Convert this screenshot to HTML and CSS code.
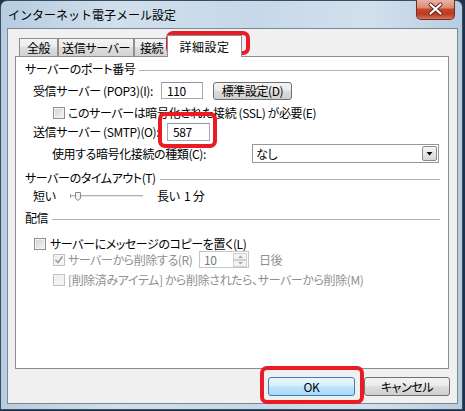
FILE: index.html
```html
<!DOCTYPE html>
<html lang="ja">
<head>
<meta charset="utf-8">
<title>インターネット電子メール設定</title>
<link rel="stylesheet" href="styles.css">
</head>
<body>
<div class="window">
  <div class="titlebar">
    <span class="title">インターネット電子メール設定</span>
    <div class="close">
      <svg width="39" height="20" viewBox="0 0 39 20">
        <path d="M14.5 4.5 L24.5 13.5 M24.5 4.5 L14.5 13.5" stroke="#5a2119" stroke-width="4" stroke-linecap="round"/>
        <path d="M14.5 4.5 L24.5 13.5 M24.5 4.5 L14.5 13.5" stroke="#ffffff" stroke-width="2.2" stroke-linecap="round"/>
      </svg>
    </div>
  </div>
  <div class="client">
    <div class="tabs">
      <div class="tab t1">全般</div>
      <div class="tab t2">送信サーバー</div>
      <div class="tab t3">接続</div>
      <div class="tab sel">詳細設定</div>
    </div>
    <div class="panel">
      <div class="group"><span>サーバーのポート番号</span><i class="rule"></i></div>
      <div class="row r-pop">
        <span class="lbl w-pop">受信サーバー (POP3)(I):</span>
        <span class="field f-pop">110</span>
        <span class="btn std">標準設定(D)</span>
      </div>
      <div class="row r-ssl">
        <span class="cb"></span>
        <span>このサーバーは暗号化された接続 (SSL) が必要(E)</span>
      </div>
      <div class="row r-smtp">
        <span class="lbl w-smtp">送信サーバー (SMTP)(O):</span>
        <span class="field f-smtp">587</span>
      </div>
      <div class="row r-enc">
        <span class="lbl w-enc">使用する暗号化接続の種類(C):</span>
        <span class="select">
          <span>なし</span>
          <span class="drop">
            <svg width="13" height="13" viewBox="0 0 13 13"><path d="M3.5 5 L9.5 5 L6.5 8.5 Z" fill="#000"/></svg>
          </span>
        </span>
      </div>
      <div class="group g2"><span>サーバーのタイムアウト(T)</span><i class="rule"></i></div>
      <div class="row r-slider">
        <span class="lbl w-short">短い</span>
        <svg class="slider" width="75" height="16" viewBox="0 0 75 16">
          <line x1="0" y1="7.5" x2="73" y2="7.5" stroke="#b0b0b0" stroke-width="1"/>
          <line x1="0" y1="8.5" x2="73" y2="8.5" stroke="#e6e6e6" stroke-width="1"/>
          <line x1="0.5" y1="6" x2="0.5" y2="10" stroke="#9a9a9a" stroke-width="1"/>
          <path d="M5.5 4.5 L10.5 4.5 L10.5 10.5 L8 12.5 L5.5 10.5 Z" fill="#f4f4f4" stroke="#8a8a8a" stroke-width="1"/>
        </svg>
        <span class="long">長い&nbsp;&nbsp;1 分</span>
      </div>
      <div class="group g3"><span>配信</span><i class="rule"></i></div>
      <div class="row r-copy">
        <span class="cb"></span>
        <span>サーバーにメッセージのコピーを置く(L)</span>
      </div>
      <div class="row r-del">
        <span class="cb dis">
          <svg width="10" height="10" viewBox="0 0 10 10"><path d="M1.5 5 L4 7.5 L8.5 1.5" fill="none" stroke="#9c9c9c" stroke-width="1.6"/></svg>
        </span>
        <span class="gray w-del">サーバーから削除する(R)</span>
        <span class="spin">
          <span class="spin-val">10</span>
          <span class="spin-btns">
            <span class="sb"><svg width="9" height="5" viewBox="0 0 9 5"><path d="M2 4 L4.5 1.5 L7 4 Z" fill="#a8a8a8"/></svg></span>
            <span class="sb"><svg width="9" height="5" viewBox="0 0 9 5"><path d="M2 1 L4.5 3.5 L7 1 Z" fill="#a8a8a8"/></svg></span>
          </span>
        </span>
        <span class="gray days">日後</span>
      </div>
      <div class="row r-moved">
        <span class="cb dis"></span>
        <span class="gray">[削除済みアイテム] から削除されたら、サーバーから削除(M)</span>
      </div>
    </div>
    <div class="footer">
      <span class="btn ok">OK</span>
      <span class="btn cancel">キャンセル</span>
    </div>
  </div>
</div>
<div class="mark m-tab"></div>
<div class="mark m-smtp"></div>
<div class="mark m-ok"></div>
</body>
</html>
```
FILE: styles.css
```css
html, body {
  margin: 0;
  padding: 0;
}
body {
  width: 465px;
  height: 411px;
  position: relative;
  overflow: hidden;
  background: #1c324d;
  font-family: "Noto Sans CJK JP", "Noto Sans", sans-serif;
  font-size: 12px;
  color: #000;
  font-feature-settings: "palt";
  letter-spacing: -0.4px;
}
.window {
  box-sizing: border-box;
  width: 463px;
  height: 410px;
  border: 1px solid #3e4b59;
  border-radius: 7px 7px 0 0;
  background: linear-gradient(90deg, #b6cce1 0%, #d0dfec 25%, #c6d8e9 55%, #d2e0ec 80%, #b8cde2 100%);
  display: flex;
  flex-direction: column;
}
.titlebar {
  height: 27px;
  flex: none;
  display: flex;
  align-items: flex-start;
  justify-content: space-between;
  padding-left: 7px;
}
.title {
  line-height: 28px;
  color: #000;
  font-feature-settings: normal;
  letter-spacing: 0;
}
.close {
  width: 39px;
  height: 20px;
  margin-top: -1px;
  margin-right: 7px;
  box-sizing: border-box;
  border: 1px solid #6e3026;
  border-top: none;
  border-radius: 0 0 5px 5px;
  background: linear-gradient(180deg, #e9b3a6 0%, #de8a73 40%, #c7432b 50%, #c03a22 75%, #d8745a 100%);
  overflow: hidden;
}
.close svg {
  display: block;
  margin-left: -1px;
}
.client {
  flex: 1;
  margin: 0 4px 5px 6px;
  border: 1px solid #7d8894;
  background: #f0f0f0;
  display: flex;
  flex-direction: column;
}
.tabs {
  display: flex;
  align-items: flex-end;
  height: 21px;
  margin-top: 6px;
  padding-left: 11px;
  flex: none;
}
.tab {
  box-sizing: border-box;
  height: 18px;
  border: 1px solid #8c8e94;
  border-bottom: none;
  background: linear-gradient(180deg, #f4f4f4 0%, #ececec 45%, #dedede 50%, #d2d2d2 100%);
  text-align: center;
  line-height: 17px;
}
.t1 { width: 39px; }
.t2 { width: 76px; }
.t3 { width: 35px; }
.sel {
  width: 75px;
  height: 22px;
  margin-left: -2px;
  margin-bottom: -1px;
  background: #fff;
  position: relative;
  z-index: 1;
  line-height: 21px;
  letter-spacing: 0.5px;
}
.panel {
  box-sizing: border-box;
  height: 313px;
  margin: 0 8px 0 7px;
  border: 1px solid #8c8e94;
  background: #fff;
  padding: 4px 8px 0 9px;
  flex: none;
}
.group {
  display: flex;
  align-items: center;
  height: 16px;
  line-height: 16px;
}
.group .rule {
  flex: 1;
  height: 0;
  border-top: 1px solid #b2b2b2;
  margin-left: 4px;
  margin-top: 2px;
}
.g2 { margin-top: 7px; }
.g3 { margin-top: 6px; }
.row {
  display: flex;
  align-items: center;
  line-height: 16px;
  white-space: nowrap;
}
.lbl { flex: none; }
.r-pop { margin-top: 4px; height: 19px; padding-left: 8px; }
.w-pop { width: 128px; }
.field {
  box-sizing: border-box;
  height: 17px;
  border: 1px solid #a4abb4;
  border-top-color: #8e959e;
  background: #fff;
  padding-left: 5px;
  line-height: 15px;
  flex: none;
}
.f-pop { width: 42px; }
.btn {
  box-sizing: border-box;
  display: block;
  height: 18px;
  border: 1px solid #707070;
  border-radius: 3px;
  background: linear-gradient(180deg, #f3f3f3 0%, #ebebeb 45%, #dddddd 50%, #cfcfcf 100%);
  text-align: center;
  line-height: 16px;
  flex: none;
}
.std { width: 79px; margin-left: 10px; }
.r-ssl { margin-top: 5px; height: 16px; padding-left: 28px; }
.cb {
  box-sizing: border-box;
  width: 12px;
  height: 12px;
  flex: none;
  border: 1px solid #8f8f8f;
  background: linear-gradient(135deg, #d2d2d2 0%, #f6f6f6 100%);
  box-shadow: inset 0 0 0 1px #f3f3f3;
  margin-right: 3px;
  display: flex;
  align-items: center;
  justify-content: center;
}
.cb.dis {
  border-color: #c2c2c2;
  background: linear-gradient(135deg, #ececec 0%, #f8f8f8 100%);
}
.r-smtp { margin-top: 2px; height: 18px; padding-left: 8px; }
.w-smtp { width: 134px; }
.f-smtp { width: 43px; height: 18px; line-height: 16px; }
.r-enc { margin-top: 3px; height: 19px; padding-left: 27px; }
.w-enc { width: 200px; }
.select {
  box-sizing: border-box;
  width: 187px;
  height: 19px;
  border: 1px solid #979797;
  background: #fff;
  display: flex;
  align-items: center;
  justify-content: space-between;
  padding-left: 3px;
  flex: none;
}
.drop {
  box-sizing: border-box;
  width: 15px;
  height: 15px;
  margin-right: 1px;
  border: 1px solid #8a8a8a;
  border-radius: 2px;
  background: linear-gradient(180deg, #f6f6f6 0%, #e6e6e6 50%, #d6d6d6 100%);
  display: flex;
  align-items: center;
  justify-content: center;
}
.r-slider { margin-top: 2px; height: 16px; padding-left: 8px; }
.w-short { width: 37px; }
.slider { flex: none; display: block; }
.long { margin-left: 12px; }
.r-copy { margin-top: 11px; height: 14px; padding-left: 9px; }
.r-copy .cb { margin-right: 4px; }
.r-del { height: 17px; padding-left: 28px; }
.gray { color: #8f8f8f; }
.w-del { width: 131px; flex: none; }
.spin {
  box-sizing: border-box;
  width: 50px;
  height: 17px;
  border: 1px solid #c3c7cc;
  background: #fff;
  display: flex;
  justify-content: space-between;
  flex: none;
}
.spin-val {
  color: #7a7a7a;
  padding-left: 4px;
  line-height: 15px;
}
.spin-btns {
  display: flex;
  flex-direction: column;
  width: 14px;
  margin: 1px 1px 1px 0;
}
.sb {
  flex: 1;
  box-sizing: border-box;
  border: 1px solid #d0d0d0;
  background: #f4f4f4;
  display: flex;
  align-items: center;
  justify-content: center;
}
.days { margin-left: 10px; }
.r-moved { margin-top: 4px; height: 16px; padding-left: 28px; }
.footer {
  display: flex;
  justify-content: flex-end;
  gap: 9px;
  margin-top: 8px;
  padding-right: 7px;
}
.ok {
  width: 87px;
  height: 19px;
  line-height: 17px;
  border-color: #3c7fb1;
  background: linear-gradient(180deg, #eaf6fd 0%, #d9f0fc 45%, #bee6fd 50%, #a7d9f5 100%);
}
.cancel {
  width: 86px;
  height: 19px;
  line-height: 17px;
}
.mark {
  position: absolute;
  box-sizing: border-box;
  border: 4px solid #ea1b22;
  border-radius: 7px;
}
.m-tab { left: 166px; top: 31px; width: 84px; height: 24px; }
.m-smtp { left: 158px; top: 112px; width: 59px; height: 36px; }
.m-ok { left: 260px; top: 366px; width: 104px; height: 38px; }
```
